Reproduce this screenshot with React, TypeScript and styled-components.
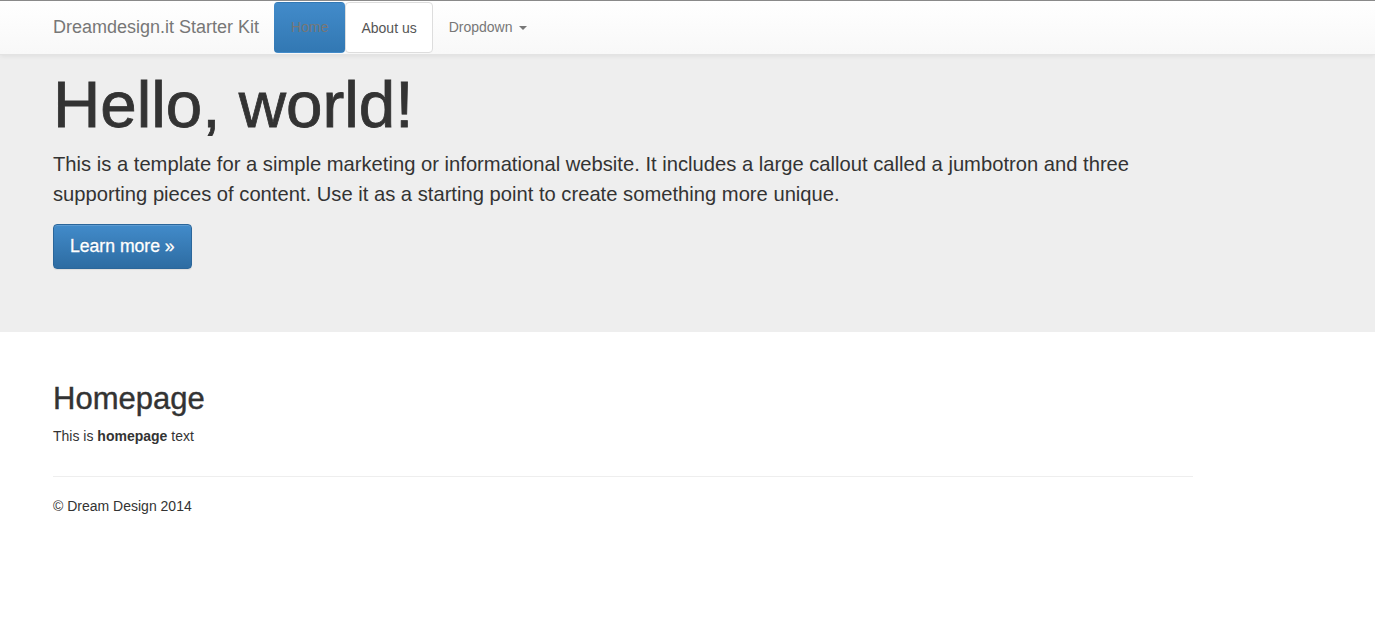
import React from "react";
import styled, { createGlobalStyle } from "styled-components";

const GlobalStyle = createGlobalStyle`
  html, body {
    margin: 0;
    padding: 0;
    background: #fff;
  }
  body {
    font-family: "Liberation Sans", Arial, sans-serif;
    font-size: 14px;
    line-height: 1.42857;
    color: #333;
  }
  * { box-sizing: border-box; }
`;

const Navbar = styled.nav`
  border-top: 1px solid #8a8a8a;
  height: 55px;
  background: linear-gradient(to bottom, #fff 0%, #f8f8f8 100%);
  border-bottom: 1px solid #e3e3e3;
  box-shadow: 0 1px 5px rgba(0, 0, 0, 0.075);
  position: relative;
  z-index: 1;
`;

const Container = styled.div`
  width: 1170px;
  margin-left: 38px;
  padding: 0 15px;
`;

const NavInner = styled(Container)`
  display: flex;
  align-items: stretch;
  height: 100%;
`;

const Brand = styled.a`
  font-size: 18px;
  color: #777;
  text-decoration: none;
  display: flex;
  align-items: center;
  padding-right: 15px;
`;

const NavItem = styled.a<{ $variant?: "active" | "open" }>`
  display: flex;
  align-items: center;
  padding: 0 15px;
  font-size: 14px;
  color: ${(p) => (p.$variant === "open" ? "#555" : "#777")};
  text-decoration: none;
  margin-top: 1px;
  margin-bottom: 1px;
  border-radius: 4px;
  border: 1px solid transparent;
  ${(p) =>
    p.$variant === "active"
      ? `background: linear-gradient(to bottom, #428bca 0%, #3278b3 100%); padding: 0 16px;`
      : ""}
  ${(p) =>
    p.$variant === "open"
      ? `background: #fff; border-color: #ddd; padding-top: 2px;`
      : ""}
`;

const Caret = styled.span`
  display: inline-block;
  width: 0;
  height: 0;
  margin-left: 6px;
  border-top: 4px solid #777;
  border-left: 4px solid transparent;
  border-right: 4px solid transparent;
`;

const Jumbotron = styled.div`
  background: #eee;
  padding: 14px 0 63px;
`;

const Title = styled.h1`
  font-size: 65.5px;
  font-weight: normal;
  line-height: 1.1;
  margin: 0 0 8px;
  color: #333;
  -webkit-text-stroke: 0.8px #333;
`;

const Lead = styled.p`
  font-size: 20.2px;
  line-height: 30px;
  margin: 0 0 15px;
  color: #333;
  max-width: 1110px;
`;

const Button = styled.a`
  display: inline-block;
  padding: 10px 16px;
  font-size: 17.6px;
  line-height: 1.33;
  border-radius: 4px;
  color: #fff;
  text-decoration: none;
  background: linear-gradient(to bottom, #428bca 0%, #2d6ca2 100%);
  border: 1px solid #2b669a;
  box-shadow: inset 0 1px 0 rgba(255, 255, 255, 0.15),
    0 1px 1px rgba(0, 0, 0, 0.075);
  text-shadow: 0 -1px 0 rgba(0, 0, 0, 0.2);
  -webkit-text-stroke: 0.3px #fff;
`;

const Main = styled(Container)`
  padding-top: 50px;
`;

const Heading = styled.h2`
  font-size: 31px;
  font-weight: normal;
  line-height: 1.1;
  margin: 0 0 10px;
  color: #333;
  -webkit-text-stroke: 0.4px #333;
`;

const Text = styled.p`
  margin: 0;
  font-size: 14px;
`;

const Rule = styled.hr`
  border: 0;
  border-top: 1px solid #eee;
  margin: 29px 0 20px;
`;

const Footer = styled.footer`
  font-size: 14px;
`;

export default function App() {
  return (
    <>
      <GlobalStyle />
      <Navbar>
        <NavInner>
          <Brand href="#">Dreamdesign.it Starter Kit</Brand>
          <NavItem $variant="active" href="#">
            Home
          </NavItem>
          <NavItem $variant="open" href="#">
            About us
          </NavItem>
          <NavItem href="#">
            Dropdown
            <Caret />
          </NavItem>
        </NavInner>
      </Navbar>
      <Jumbotron>
        <Container>
          <Title>Hello, world!</Title>
          <Lead>
            This is a template for a simple marketing or informational website.
            It includes a large callout called a jumbotron and three supporting
            pieces of content. Use it as a starting point to create something
            more unique.
          </Lead>
          <Button href="#">Learn more »</Button>
        </Container>
      </Jumbotron>
      <Main>
        <Heading>Homepage</Heading>
        <Text>
          This is <strong>homepage</strong> text
        </Text>
        <Rule />
        <Footer>© Dream Design 2014</Footer>
      </Main>
    </>
  );
}
